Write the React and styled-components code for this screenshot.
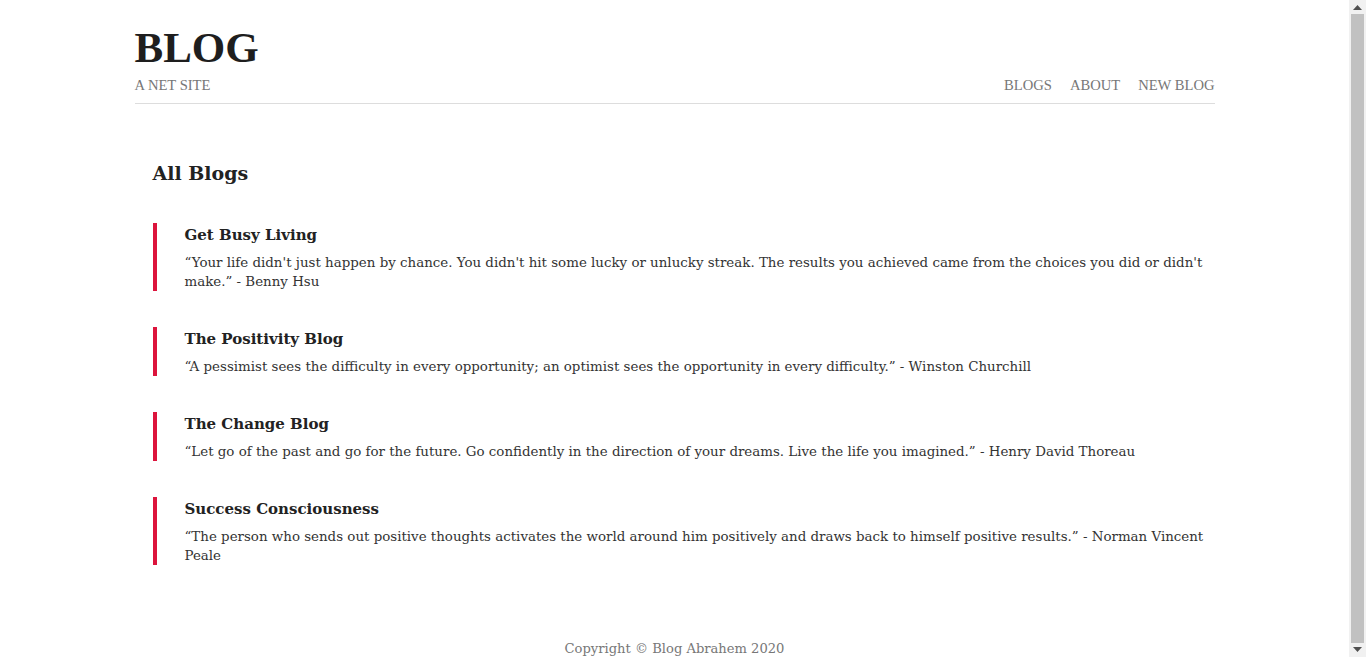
import React from 'react';
import styled, { createGlobalStyle } from 'styled-components';

const GlobalStyle = createGlobalStyle`
  html, body {
    margin: 0;
    padding: 0;
    background: #fff;
  }
  body {
    padding-right: 17px;
    font-family: "DejaVu Serif", serif;
    color: #222;
  }
`;

const blogs = [
  {
    title: 'Get Busy Living',
    quote:
      "\u201CYour life didn't just happen by chance. You didn't hit some lucky or unlucky streak. The results you achieved came from the choices you did or didn't make.\u201D - Benny Hsu"
  },
  {
    title: 'The Positivity Blog',
    quote:
      '\u201CA pessimist sees the difficulty in every opportunity; an optimist sees the opportunity in every difficulty.\u201D - Winston Churchill'
  },
  {
    title: 'The Change Blog',
    quote:
      '\u201CLet go of the past and go for the future. Go confidently in the direction of your dreams. Live the life you imagined.\u201D - Henry David Thoreau'
  },
  {
    title: 'Success Consciousness',
    quote:
      '\u201CThe person who sends out positive thoughts activates the world around him positively and draws back to himself positive results.\u201D - Norman Vincent Peale'
  }
];

const App = () => (
  <>
    <GlobalStyle />
    <Page>
      <Header>
        <Brand>
          <Logo>BLOG</Logo>
          <Tagline>A NET SITE</Tagline>
        </Brand>
        <Nav>
          <NavLink href="#">BLOGS</NavLink>
          <NavLink href="#">ABOUT</NavLink>
          <NavLink href="#">NEW BLOG</NavLink>
        </Nav>
      </Header>
      <Main>
        <PageTitle>All Blogs</PageTitle>
        <BlogList>
          {blogs.map((b) => (
            <BlogItem key={b.title}>
              <BlogTitle>{b.title}</BlogTitle>
              <BlogQuote>{b.quote}</BlogQuote>
            </BlogItem>
          ))}
        </BlogList>
      </Main>
      <Footer>Copyright &copy; Blog Abrahem 2020</Footer>
    </Page>
    {/* the window's scrollbar, as seen in the screenshot */}
    <ScrollTrack>
      <ScrollArrow viewBox="0 0 9 5" width="9" height="5">
        <path d="M0 5 L4.5 0 L9 5 Z" fill="#505050" />
      </ScrollArrow>
      <ScrollThumb />
      <ScrollArrow viewBox="0 0 9 5" width="9" height="5">
        <path d="M0 0 L4.5 5 L9 0 Z" fill="#505050" />
      </ScrollArrow>
    </ScrollTrack>
  </>
);

const Page = styled.div`
  width: 1080px;
  margin: 0 auto;
`;

const Header = styled.header`
  display: flex;
  justify-content: space-between;
  align-items: flex-end;
  padding-top: 24px;
  padding-bottom: 9px;
  border-bottom: 1px solid #ddd;
`;

const Brand = styled.div`
  display: flex;
  flex-direction: column;
`;

const Logo = styled.h1`
  margin: 0;
  font-family: "Liberation Serif", serif;
  font-size: 43px;
  font-weight: bold;
  line-height: 48px;
  color: #1e1e1e;
`;

const Tagline = styled.div`
  margin-top: 5px;
  font-family: "Liberation Serif", serif;
  font-size: 14.6px;
  line-height: 17px;
  color: #777;
`;

const Nav = styled.nav`
  display: flex;
  gap: 18px;
`;

const NavLink = styled.a`
  font-family: "Liberation Serif", serif;
  font-size: 14.6px;
  line-height: 17px;
  color: #777;
  text-decoration: none;
`;

const Main = styled.main`
  padding: 56px 0 0 18px;
`;

const PageTitle = styled.h2`
  margin: 0 0 36px;
  font-size: 19px;
  font-weight: bold;
  line-height: 27px;
  color: #222;
`;

const BlogList = styled.div`
  display: flex;
  flex-direction: column;
  gap: 36px;
`;

const BlogItem = styled.article`
  border-left: 4px solid crimson;
  padding-left: 28px;
`;

const BlogTitle = styled.h3`
  margin: 0 0 6px;
  font-size: 15px;
  font-weight: bold;
  line-height: 24px;
  color: #222;
`;

const BlogQuote = styled.p`
  margin: 0;
  font-size: 13.4px;
  line-height: 19px;
  color: #333;
`;

const Footer = styled.footer`
  margin-top: 75px;
  padding-bottom: 22px;
  text-align: center;
  font-size: 13.1px;
  line-height: 18px;
  color: #777;
`;

const ScrollTrack = styled.div`
  position: fixed;
  top: 0;
  right: 0;
  bottom: 0;
  width: 17px;
  background: #f1f1f1;
  display: flex;
  flex-direction: column;
  align-items: center;
  justify-content: space-between;
  padding: 5px 0;
  box-sizing: border-box;
`;

const ScrollArrow = styled.svg`
  flex: none;
`;

const ScrollThumb = styled.div`
  flex: 1;
  width: 13px;
  margin: 4px 0;
  background: #c1c1c1;
`;

export default App;
